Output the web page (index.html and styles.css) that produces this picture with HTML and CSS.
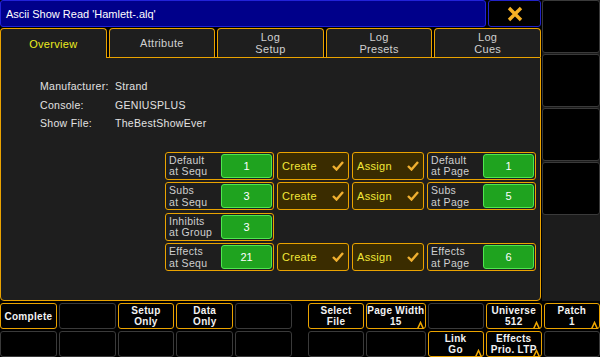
FILE: index.html
```html
<!DOCTYPE html>
<html lang="en">
<head>
  <meta charset="UTF-8">
  <title>Ascii Show Read</title>
  <link rel="stylesheet" href="styles.css">
</head>
<body>
  <div class="screen">
    <div class="main">
      <div class="titlebar">
        <div class="title">Ascii Show Read 'Hamlett-.alq'</div>
        <div class="close">
          <svg width="16" height="16" viewBox="0 0 16 16"><path d="M2 2 L14 14 M14 2 L2 14" stroke="#f4b025" stroke-width="3.4" fill="none"/></svg>
        </div>
      </div>
      <div class="panel">
        <div class="tabs">
          <div class="tab active">Overview</div>
          <div class="tab">Attribute</div>
          <div class="tab">Log<br>Setup</div>
          <div class="tab">Log<br>Presets</div>
          <div class="tab">Log<br>Cues</div>
        </div>
        <div class="content">
          <div class="info">
            <span>Manufacturer:</span><span>Strand</span>
            <span>Console:</span><span>GENIUSPLUS</span>
            <span>Show File:</span><span>TheBestShowEver</span>
          </div>
          <div class="grid">
            <div class="pair"><div class="label">Default<br>at Sequ</div><div class="val">1</div></div>
            <div class="opt"><span>Create</span><svg class="tick" width="12" height="10" viewBox="0 0 12 10"><path d="M1 5 L4.5 8.5 L11 1" stroke="#f0b030" stroke-width="2.4" fill="none"/></svg></div>
            <div class="opt"><span>Assign</span><svg class="tick" width="12" height="10" viewBox="0 0 12 10"><path d="M1 5 L4.5 8.5 L11 1" stroke="#f0b030" stroke-width="2.4" fill="none"/></svg></div>
            <div class="pair"><div class="label">Default<br>at Page</div><div class="val">1</div></div>

            <div class="pair"><div class="label">Subs<br>at Sequ</div><div class="val">3</div></div>
            <div class="opt"><span>Create</span><svg class="tick" width="12" height="10" viewBox="0 0 12 10"><path d="M1 5 L4.5 8.5 L11 1" stroke="#f0b030" stroke-width="2.4" fill="none"/></svg></div>
            <div class="opt"><span>Assign</span><svg class="tick" width="12" height="10" viewBox="0 0 12 10"><path d="M1 5 L4.5 8.5 L11 1" stroke="#f0b030" stroke-width="2.4" fill="none"/></svg></div>
            <div class="pair"><div class="label">Subs<br>at Page</div><div class="val">5</div></div>

            <div class="pair"><div class="label">Inhibits<br>at Group</div><div class="val">3</div></div>
            <div class="blank"></div>
            <div class="blank"></div>
            <div class="blank"></div>

            <div class="pair"><div class="label">Effects<br>at Sequ</div><div class="val">21</div></div>
            <div class="opt"><span>Create</span><svg class="tick" width="12" height="10" viewBox="0 0 12 10"><path d="M1 5 L4.5 8.5 L11 1" stroke="#f0b030" stroke-width="2.4" fill="none"/></svg></div>
            <div class="opt"><span>Assign</span><svg class="tick" width="12" height="10" viewBox="0 0 12 10"><path d="M1 5 L4.5 8.5 L11 1" stroke="#f0b030" stroke-width="2.4" fill="none"/></svg></div>
            <div class="pair"><div class="label">Effects<br>at Page</div><div class="val">6</div></div>
          </div>
        </div>
      </div>
    </div>
    <div class="side">
      <div class="cell"></div>
      <div class="cell"></div>
      <div class="cell"></div>
      <div class="cell"></div>
    </div>
  </div>

  <div class="bottom">
    <div class="group">
      <div class="key on">Complete</div>
      <div class="key"></div>
      <div class="key on">Setup<br>Only</div>
      <div class="key on">Data<br>Only</div>
      <div class="key"></div>
      <div class="key"></div>
      <div class="key"></div>
      <div class="key"></div>
      <div class="key"></div>
      <div class="key"></div>
    </div>
    <div class="group">
      <div class="key on">Select<br>File</div>
      <div class="key on">Page Width<br>15<svg class="mark" width="7" height="8" viewBox="0 0 7 8"><path d="M0.5 8 L3.5 1.5 L6.5 8" stroke="#f0a800" stroke-width="1.5" fill="none"/></svg></div>
      <div class="key"></div>
      <div class="key on">Universe<br>512<svg class="mark" width="7" height="8" viewBox="0 0 7 8"><path d="M0.5 8 L3.5 1.5 L6.5 8" stroke="#f0a800" stroke-width="1.5" fill="none"/></svg></div>
      <div class="key on">Patch<br>1<svg class="mark" width="7" height="8" viewBox="0 0 7 8"><path d="M0.5 8 L3.5 1.5 L6.5 8" stroke="#f0a800" stroke-width="1.5" fill="none"/></svg></div>
      <div class="key"></div>
      <div class="key"></div>
      <div class="key on">Link<br>Go<svg class="mark" width="7" height="8" viewBox="0 0 7 8"><path d="M0.5 8 L3.5 1.5 L6.5 8" stroke="#f0a800" stroke-width="1.5" fill="none"/></svg></div>
      <div class="key on">Effects<br>Prio. LTP<svg class="mark" width="7" height="8" viewBox="0 0 7 8"><path d="M0.5 8 L3.5 1.5 L6.5 8" stroke="#f0a800" stroke-width="1.5" fill="none"/></svg></div>
      <div class="key"></div>
    </div>
  </div>
</body>
</html>
```

FILE: styles.css
```css
* {
  box-sizing: border-box;
}
body {
  margin: 0;
  width: 600px;
  height: 357px;
  background: #000;
  font-family: "Liberation Sans", Arial, sans-serif;
  color: #d4d4d4;
  overflow: hidden;
}
.screen {
  display: flex;
  height: 301px;
}
.main {
  width: 541px;
  display: flex;
  flex-direction: column;
}
.titlebar {
  display: flex;
  gap: 2px;
  height: 27px;
  margin-bottom: 1px;
}
.title {
  flex: 1;
  background: #00008a;
  border: 1px solid #2222d8;
  border-radius: 3px;
  color: #fff;
  font-size: 11px;
  padding: 7px 0 0 5px;
}
.close {
  width: 53px;
  background: #000;
  border: 1px solid #2222c8;
  border-radius: 3px;
  display: flex;
  align-items: center;
  justify-content: center;
}
.panel {
  flex: 1;
  display: flex;
  flex-direction: column;
}
.tabs {
  display: flex;
  gap: 2px;
  height: 29px;
}
.tab {
  flex: 1;
  background: #1e1e1e;
  border: 1px solid #eaa300;
  border-bottom: none;
  border-radius: 4px 4px 0 0;
  font-size: 11px;
  line-height: 12px;
  letter-spacing: 0.3px;
  text-align: center;
  display: flex;
  align-items: center;
  justify-content: center;
  color: #d0d0d0;
}
.tab.active {
  position: relative;
  z-index: 1;
  height: 30px;
  color: #ecec20;
}
.content {
  flex: 1;
  background: #1e1e1e;
  border: 1px solid #eaa300;
  border-radius: 0 0 4px 4px;
  padding: 21px 0 0 39px;
}
.info {
  display: grid;
  grid-template-columns: 75px auto;
  grid-auto-rows: 18.5px;
  font-size: 10.5px;
  line-height: 14px;
  letter-spacing: 0.3px;
  color: #e2e2e2;
}
.grid {
  display: grid;
  grid-template-columns: 109px 72px 72px 109px;
  grid-auto-rows: 28px;
  column-gap: 3px;
  row-gap: 2.5px;
  margin: 17px 0 0 125px;
}
.pair {
  display: flex;
  align-items: stretch;
  border: 1px solid #eaa300;
  border-radius: 3px;
  background: #1e1e1e;
  padding: 1px;
}
.label {
  flex: 1;
  font-size: 10.5px;
  line-height: 11.5px;
  letter-spacing: 0.3px;
  color: #cfcfcf;
  padding: 1px 0 0 2px;
}
.val {
  width: 51px;
  background: #1fa31f;
  border: 1px solid #4fe84f;
  border-radius: 3px;
  color: #fff;
  font-size: 11px;
  display: flex;
  align-items: center;
  justify-content: center;
}
.opt {
  display: flex;
  align-items: center;
  justify-content: space-between;
  border: 1px solid #eaa300;
  border-radius: 3px;
  background: #3a2c00;
  color: #f2e838;
  font-size: 11px;
  letter-spacing: 0.3px;
  padding: 0 4px 0 4px;
}
.side {
  width: 58px;
  margin-left: 1px;
  background: #1c1c1c;
  display: flex;
  flex-direction: column;
  gap: 1.5px;
}
.cell {
  height: 52.5px;
  background: #000;
  border: 1px solid #3a3a3a;
  border-radius: 3px;
}
.bottom {
  display: flex;
  gap: 16px;
  padding-top: 2px;
}
.group {
  flex: 1;
  display: grid;
  grid-template-columns: repeat(5, 1fr);
  grid-auto-rows: 26px;
  gap: 2px;
}
.key {
  position: relative;
  background: #000;
  border: 1px solid #3a3a3a;
  border-radius: 3px;
  color: #f2f2f2;
  font-size: 10px;
  font-weight: bold;
  line-height: 11px;
  text-align: center;
  display: flex;
  align-items: center;
  justify-content: center;
  letter-spacing: 0.3px;
  white-space: nowrap;
}
.key.on {
  border-color: #eaa300;
}
.mark {
  position: absolute;
  right: 1px;
  bottom: -1px;
}
```
